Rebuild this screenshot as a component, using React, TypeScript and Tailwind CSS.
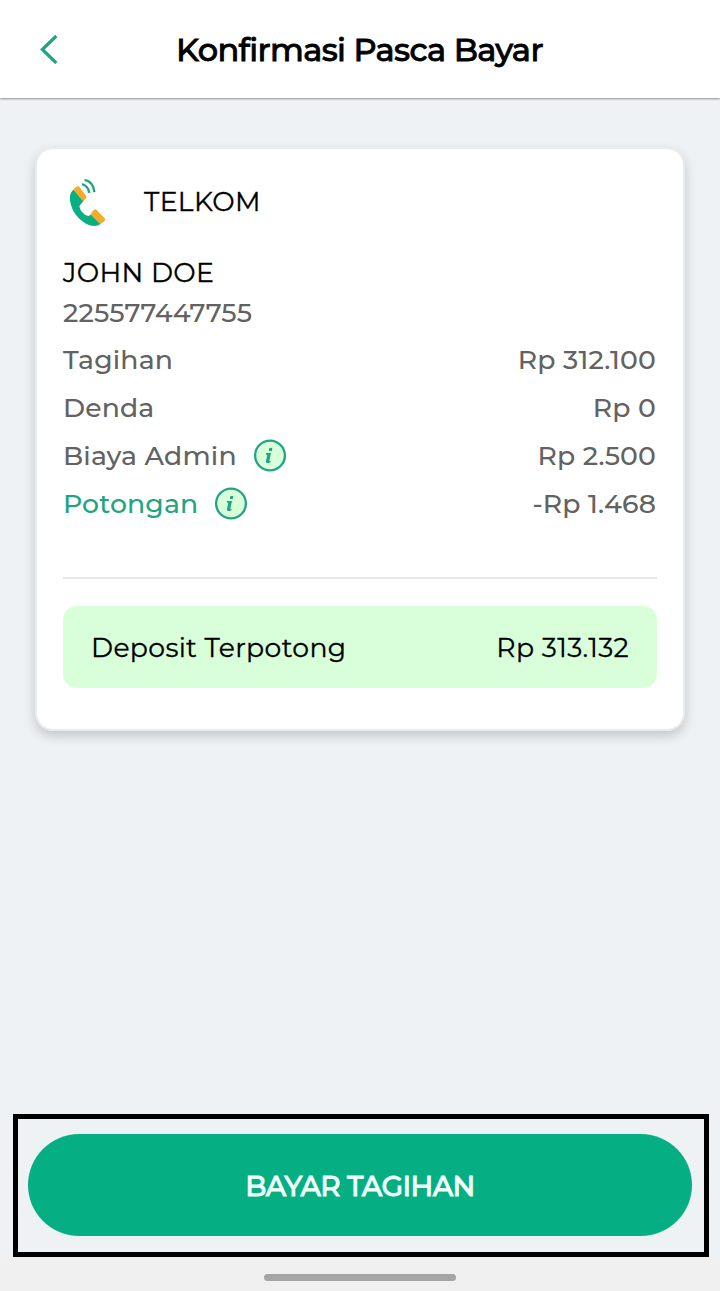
import type { ReactNode } from 'react';

function InfoIcon() {
  return (
    <svg width="34" height="34" viewBox="0 0 34 34" fill="none">
      <circle cx="17" cy="16.500" r="14.900" fill="#d8ffda" stroke="#1fa582" strokeWidth="2.300" />
      <path d="M16.400 9h3l-.6 3.100h-3z" fill="#1fa582" />
      <path
        d="M13.100 14h4.900l-1.600 7.600c-.1.7.3.9 1.500.3l-.2 1.100c-1 .8-2.100 1.100-3 1.100-1.300 0-2-.8-1.700-2.200l1.300-6.200h-1.500z"
        fill="#1fa582"
      />
    </svg>
  );
}

function PhoneIcon() {
  return (
    <svg width="40" height="50" viewBox="0 0 40 50" fill="none">
      <path
        d="M4.500 12.500C1 15.500 0.500 19.500 1.200 24.500C2.500 33.500 9 42.500 17.500 47C22.500 49.500 28 49.600 31.500 47L22 37.500L19.500 39C14.500 38 11 33.500 10.400 29L14.500 24Z"
        fill="#09ae83"
      />
      <path d="M4.500 12.500L7.500 9.600Q9.300 8.600 10.700 10.200L17.200 18.900Q18 20.200 17 21.200L14.200 24.500Z" fill="#f2ab2b" />
      <path d="M21.500 37.500L24.600 32.900Q26 31.700 27.600 32.900L35.600 41.200Q36.600 42.400 35.600 43.700L31.500 47.300Z" fill="#f2ab2b" />
      <path
        d="M15.600 2.800C21.300 4 24.800 8.600 25.400 15.200M13 7.200C17 8.400 19.700 11.400 20.300 15.900"
        stroke="#1fa582"
        strokeWidth="2.400"
      />
    </svg>
  );
}

interface RowProps {
  label: string;
  value: string;
  green?: boolean;
  info?: boolean;
}

function Row({ label, value, green, info }: RowProps) {
  return (
    <div className="flex h-12 items-center justify-between">
      <div className="flex items-center gap-4">
        <span className={green ? 'text-[#1fa582]' : ''}>{label}</span>
        {info && <InfoIcon />}
      </div>
      <span className="pr-px">{value}</span>
    </div>
  );
}

function Card({ children }: { children: ReactNode }) {
  return (
    <div className="mx-[35px] mt-[49px] h-[584px] rounded-[18px] border-2 border-[#e9ecef] bg-white px-[26px] pt-7 shadow-[0_5px_12px_rgba(0,0,0,0.18)]">
      {children}
    </div>
  );
}

export default function App() {
  return (
    <div className="flex h-[1291px] w-[720px] flex-col overflow-hidden bg-[#eef2f5] font-['Montserrat','Inter',sans-serif] text-[26.700px] leading-8 tracking-[0.35px] text-black whitespace-nowrap">
      {/* Header */}
      <header className="flex h-[98px] shrink-0 items-center bg-white pl-10 shadow-[0_1px_2px_rgba(0,0,0,0.4)]">
        <svg width="18" height="30" viewBox="0 0 18 30" fill="none">
          <path d="M16.300 2L2.300 15.500L16.300 29" stroke="#1fa582" strokeWidth="3.200" />
        </svg>
        <h1 className="ml-[118px] pt-0.5 text-[32px] font-medium tracking-[-0.6px] [font-variant-ligatures:none] [-webkit-text-stroke:0.8px_#000]">
          Konfirmasi Pasca Bayar
        </h1>
      </header>

      <Card>
        {/* Provider */}
        <div className="flex h-[50px] items-center gap-10">
          <div className="pl-1.5">
            <PhoneIcon />
          </div>
          <span className="-ml-[5px] [-webkit-text-stroke:0.3px_#000]">TELKOM</span>
        </div>

        {/* Customer */}
        <div className="mt-[30px] h-10 [-webkit-text-stroke:0.3px_#000]">JOHN DOE</div>
        <div className="h-[39px] font-medium tracking-[0.15px] text-[#626262]">225577447755</div>

        {/* Bill details */}
        <div className="font-medium tracking-[0.15px] text-[#626262]">
          <Row label="Tagihan" value="Rp 312.100" />
          <Row label="Denda" value="Rp 0" />
          <Row label="Biaya Admin" value="Rp 2.500" info />
          <Row label="Potongan" value="-Rp 1.468" green info />
        </div>

        <div className="mt-[49px] h-0.5 bg-[#e8e8e8]" />

        {/* Total */}
        <div className="mt-[27px] flex h-[82px] items-center justify-between rounded-[14px] bg-[#d8ffda] px-7 pt-0.5 [-webkit-text-stroke:0.3px_#000]">
          <span>Deposit Terpotong</span>
          <span>Rp 313.132</span>
        </div>
      </Card>

      {/* Pay button */}
      <div className="mt-auto mr-[11px] ml-[13px] h-[143px] shrink-0 border-5 border-black px-2.5 pt-[15px]">
        <button className="flex h-[102px] w-[664px] items-center justify-center rounded-full bg-[#06af83] pt-px text-[28px] font-medium tracking-[-0.6px] text-[#f2fffb] [-webkit-text-stroke:0.8px_#f2fffb]">
          BAYAR TAGIHAN
        </button>
      </div>

      {/* Gesture bar */}
      <div className="flex h-[34px] shrink-0 justify-center bg-[#f0f0f0] pt-[17px]">
        <div className="h-[7px] w-48 rounded-full bg-[#a5a5a5]" />
      </div>
    </div>
  );
}
